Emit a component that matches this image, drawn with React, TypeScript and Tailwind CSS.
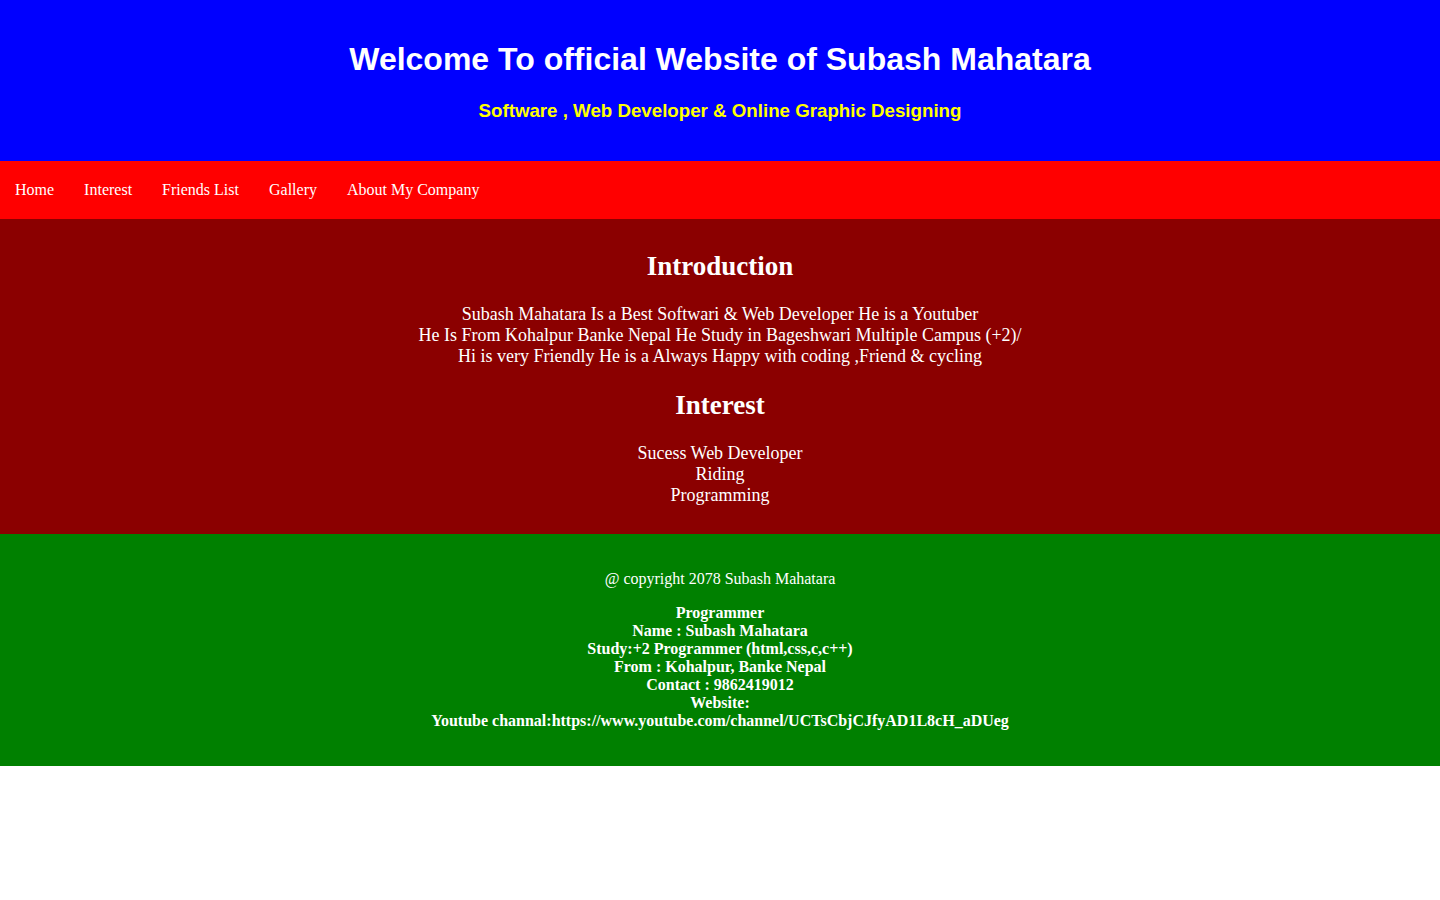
export default function App() {
  const navLinks = ["Home", "Interest", "Friends List", "Gallery", "About My Company"];

  const introLines = [
    "Subash Mahatara Is a Best Softwari & Web Developer He is a Youtuber",
    "He Is From Kohalpur Banke Nepal He Study in Bageshwari Multiple Campus (+2)/",
    "Hi is very Friendly He is a Always Happy with coding ,Friend & cycling",
  ];

  const interests = ["Sucess Web Developer", "Riding", "Programming"];

  const details = [
    "Programmer",
    "Name : Subash Mahatara",
    "Study:+2 Programmer (html,css,c,c++)",
    "From : Kohalpur, Banke Nepal",
    "Contact : 9862419012",
    "Website:",
    "Youtube channal:https://www.youtube.com/channel/UCTsCbjCJfyAD1L8cH_aDUeg",
  ];

  return (
    <div className="min-h-screen bg-white font-['Liberation_Serif',serif] text-white">
      {/* Header */}
      <header className="bg-[#0000ff] pt-[41px] pb-[39px] text-center font-['Liberation_Sans',Arial,sans-serif]">
        <h1 className="text-[32px] font-bold leading-[37px]">
          Welcome To official Website of Subash Mahatara
        </h1>
        <h3 className="mt-[22px] text-[18.72px] font-bold leading-[22px] text-[#ffff00]">
          Software , Web Developer &amp; Online Graphic Designing
        </h3>
      </header>

      {/* Nav */}
      <nav className="flex bg-[#ff0000]">
        {navLinks.map((link) => (
          <a key={link} href="#" className="px-[15px] py-5 text-base leading-[18px] text-white">
            {link}
          </a>
        ))}
      </nav>

      {/* Main */}
      <main className="bg-[#8b0000] pt-[32px] pb-[28px] text-center text-[18px]">
        <h2 className="text-[27px] font-bold leading-[31px]">Introduction</h2>
        <p className="mt-[22px] leading-[21px]">
          {introLines.map((line) => (
            <span key={line} className="block">{line}</span>
          ))}
        </p>
        <h2 className="mt-[23px] text-[27px] font-bold leading-[31px]">Interest</h2>
        <p className="mt-[22px] leading-[21px]">
          {interests.map((item) => (
            <span key={item} className="block">{item}</span>
          ))}
        </p>
      </main>

      {/* Footer */}
      <footer className="bg-[#008000] pt-[36px] pb-[36px] text-center text-base">
        <p className="leading-[18px]">@ copyright 2078 Subash Mahatara</p>
        <div className="mt-4 font-bold leading-[18px]">
          {details.map((d) => (
            <div key={d}>{d}</div>
          ))}
        </div>
      </footer>
    </div>
  );
}
